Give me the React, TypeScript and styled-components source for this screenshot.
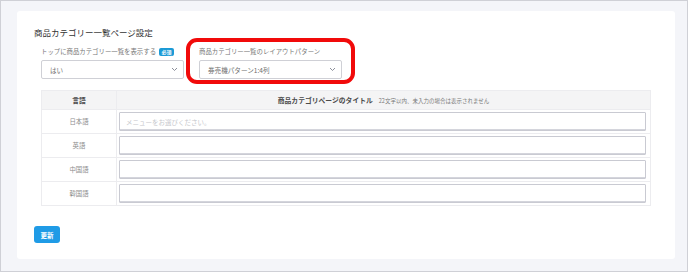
import styled, { createGlobalStyle } from 'styled-components'

const GlobalStyle = createGlobalStyle`
  body {
    margin: 0;
    font-family: "Noto Sans CJK JP", "Noto Sans", sans-serif;
  }
`

const languages = ['日本語', '英語', '中国語', '韓国語']

const Chevron = () => (
  <svg width="7" height="5" viewBox="0 0 7 5">
    <path d="M1 1 L3.5 3.5 L6 1" fill="none" stroke="#7f828e" strokeWidth="0.9" />
  </svg>
)

export default function App() {
  return (
    <>
      <GlobalStyle />
      <StyledFrame>
        <StyledCard>
          <StyledTitle>商品カテゴリー一覧ページ設定</StyledTitle>
          <StyledForm>
            <StyledFieldRow>
              <StyledFieldGroup>
                <StyledLabel>
                  トップに商品カテゴリー一覧を表示する
                  <StyledBadge>必須</StyledBadge>
                </StyledLabel>
                <StyledSelect>
                  <span>はい</span>
                  <Chevron />
                </StyledSelect>
              </StyledFieldGroup>
              <StyledFieldGroup $highlight>
                <StyledLabel>商品カテゴリー一覧のレイアウトパターン</StyledLabel>
                <StyledSelect>
                  <span>券売機パターン1:4列</span>
                  <Chevron />
                </StyledSelect>
              </StyledFieldGroup>
            </StyledFieldRow>

            <StyledTable>
              <thead>
                <tr>
                  <StyledHeadCell $narrow>言語</StyledHeadCell>
                  <StyledHeadCell>
                    商品カテゴリページのタイトル
                    <StyledNote>22文字以内、未入力の場合は表示されません</StyledNote>
                  </StyledHeadCell>
                </tr>
              </thead>
              <tbody>
                {languages.map((lang, index) => (
                  <tr key={lang}>
                    <StyledLangCell>{lang}</StyledLangCell>
                    <StyledInputCell>
                      <StyledInput placeholder={index === 0 ? 'メニューをお選びください。' : ''} />
                    </StyledInputCell>
                  </tr>
                ))}
              </tbody>
            </StyledTable>
          </StyledForm>
          <StyledButton>更新</StyledButton>
        </StyledCard>
      </StyledFrame>
    </>
  )
}

const StyledFrame = styled.div`
  width: 688px;
  height: 272px;
  box-sizing: border-box;
  border: 1px solid #cfd0d6;
  background-color: #f4f5f9;
  padding: 10px 12px 0 16px;
`

const StyledCard = styled.div`
  width: 658px;
  height: 248px;
  box-sizing: border-box;
  background-color: #fff;
  border-radius: 3px;
  padding: 15px 17px 0;
  display: flex;
  flex-direction: column;
  align-items: flex-start;
`

const StyledTitle = styled.div`
  font-size: 8.5px;
  line-height: 12px;
  color: #333;
`

const StyledForm = styled.div`
  align-self: stretch;
  padding: 0 7px;
`

const StyledFieldRow = styled.div`
  display: flex;
  gap: 15px;
  margin-top: 9px;
`

const StyledFieldGroup = styled.div<{ $highlight?: boolean }>`
  position: relative;
  width: 143px;

  ${({ $highlight }) => $highlight && `
    &::after {
      content: '';
      position: absolute;
      top: -9px;
      left: -13px;
      right: -13px;
      bottom: -5px;
      border: 4px solid #f10a0a;
      border-radius: 11px;
      pointer-events: none;
    }
  `}
`

const StyledLabel = styled.div`
  display: flex;
  align-items: center;
  gap: 3px;
  font-size: 6.4px;
  line-height: 10px;
  color: #777;
  margin-bottom: 3px;
  white-space: nowrap;
`

const StyledBadge = styled.span`
  display: inline-block;
  background-color: #1b9ad6;
  color: #fff;
  font-size: 5px;
  line-height: 8px;
  padding: 0 2.5px;
  border-radius: 2px;
  font-weight: bold;
`

const StyledSelect = styled.div`
  height: 19px;
  box-sizing: border-box;
  border: 1px solid #cfd0d6;
  border-radius: 2px;
  padding: 0 5px 0 8px;
  display: flex;
  align-items: center;
  justify-content: space-between;
  font-size: 6.6px;
  color: #6f6f6f;
`

const StyledTable = styled.table`
  width: 100%;
  margin-top: 11px;
  border-collapse: collapse;
  border: 1px solid #ececef;
`

const StyledHeadCell = styled.th<{ $narrow?: boolean }>`
  height: 18px;
  padding: 0;
  width: ${({ $narrow }) => ($narrow ? '74px' : 'auto')};
  background-color: #f4f4f5;
  border-right: 1px solid #ececef;
  font-size: 6.8px;
  font-weight: bold;
  color: #4a4a4a;
  text-align: center;
`

const StyledNote = styled.span`
  margin-left: 6px;
  font-size: 5.5px;
  font-weight: normal;
  color: #7a7a7a;
`

const StyledLangCell = styled.td`
  height: 23px;
  padding: 0;
  border-top: 1px solid #ececef;
  border-right: 1px solid #ececef;
  font-size: 6.4px;
  color: #8c8c8c;
  text-align: center;
`

const StyledInputCell = styled.td`
  padding: 2px 4px 2px 2px;
  border-top: 1px solid #ececef;
`

const StyledInput = styled.input`
  display: block;
  width: 100%;
  height: 19px;
  box-sizing: border-box;
  border: 1px solid #c9cad2;
  border-radius: 1px;
  box-shadow: inset 0 -1px 0 #d4d5dc;
  padding: 0 6px;
  font-family: inherit;
  font-size: 6.5px;
  outline: none;

  &::placeholder {
    color: #c6c7cc;
  }
`

const StyledButton = styled.button`
  margin-top: 20px;
  width: 26px;
  height: 17px;
  padding: 0;
  border: none;
  border-radius: 3px;
  background-color: #1f9be6;
  color: #fff;
  font-family: inherit;
  font-size: 6.5px;
  font-weight: bold;
  cursor: pointer;
`
